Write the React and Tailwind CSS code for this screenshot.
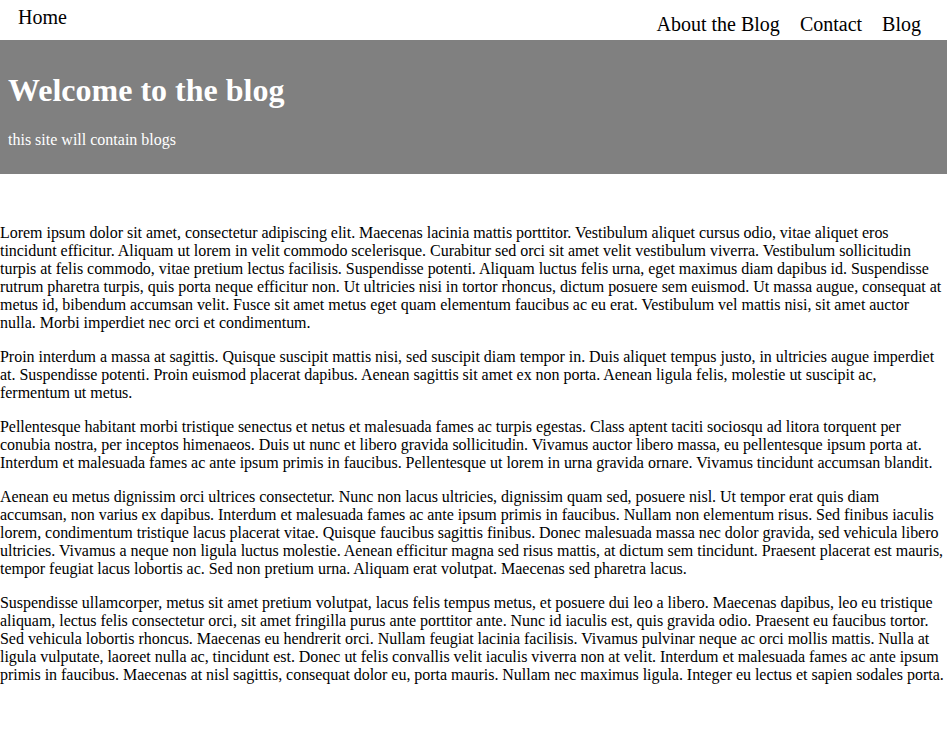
const paragraphs = [
  'Lorem ipsum dolor sit amet, consectetur adipiscing elit. Maecenas lacinia mattis porttitor. Vestibulum aliquet cursus odio, vitae aliquet eros tincidunt efficitur. Aliquam ut lorem in velit commodo scelerisque. Curabitur sed orci sit amet velit vestibulum viverra. Vestibulum sollicitudin turpis at felis commodo, vitae pretium lectus facilisis. Suspendisse potenti. Aliquam luctus felis urna, eget maximus diam dapibus id. Suspendisse rutrum pharetra turpis, quis porta neque efficitur non. Ut ultricies nisi in tortor rhoncus, dictum posuere sem euismod. Ut massa augue, consequat at metus id, bibendum accumsan velit. Fusce sit amet metus eget quam elementum faucibus ac eu erat. Vestibulum vel mattis nisi, sit amet auctor nulla. Morbi imperdiet nec orci et condimentum.',
  'Proin interdum a massa at sagittis. Quisque suscipit mattis nisi, sed suscipit diam tempor in. Duis aliquet tempus justo, in ultricies augue imperdiet at. Suspendisse potenti. Proin euismod placerat dapibus. Aenean sagittis sit amet ex non porta. Aenean ligula felis, molestie ut suscipit ac, fermentum ut metus.',
  'Pellentesque habitant morbi tristique senectus et netus et malesuada fames ac turpis egestas. Class aptent taciti sociosqu ad litora torquent per conubia nostra, per inceptos himenaeos. Duis ut nunc et libero gravida sollicitudin. Vivamus auctor libero massa, eu pellentesque ipsum porta at. Interdum et malesuada fames ac ante ipsum primis in faucibus. Pellentesque ut lorem in urna gravida ornare. Vivamus tincidunt accumsan blandit.',
  'Aenean eu metus dignissim orci ultrices consectetur. Nunc non lacus ultricies, dignissim quam sed, posuere nisl. Ut tempor erat quis diam accumsan, non varius ex dapibus. Interdum et malesuada fames ac ante ipsum primis in faucibus. Nullam non elementum risus. Sed finibus iaculis lorem, condimentum tristique lacus placerat vitae. Quisque faucibus sagittis finibus. Donec malesuada massa nec dolor gravida, sed vehicula libero ultricies. Vivamus a neque non ligula luctus molestie. Aenean efficitur magna sed risus mattis, at dictum sem tincidunt. Praesent placerat est mauris, tempor feugiat lacus lobortis ac. Sed non pretium urna. Aliquam erat volutpat. Maecenas sed pharetra lacus.',
  'Suspendisse ullamcorper, metus sit amet pretium volutpat, lacus felis tempus metus, et posuere dui leo a libero. Maecenas dapibus, leo eu tristique aliquam, lectus felis consectetur orci, sit amet fringilla purus ante porttitor ante. Nunc id iaculis est, quis gravida odio. Praesent eu faucibus tortor. Sed vehicula lobortis rhoncus. Maecenas eu hendrerit orci. Nullam feugiat lacinia facilisis. Vivamus pulvinar neque ac orci mollis mattis. Nulla at ligula vulputate, laoreet nulla ac, tincidunt est. Donec ut felis convallis velit iaculis viverra non at velit. Interdum et malesuada fames ac ante ipsum primis in faucibus. Maecenas at nisl sagittis, consequat dolor eu, porta mauris. Nullam nec maximus ligula. Integer eu lectus et sapien sodales porta.',
];

const links = ['About the Blog', 'Contact', 'Blog'];

export default function App() {
  return (
    <div className="min-h-screen bg-white text-black font-['Liberation_Serif',serif] text-base leading-[normal]">
      <nav className="flex h-10 items-start justify-between">
        <a href="#" className="pl-[18px] pt-[3px] text-xl">
          Home
        </a>
        <ul className="flex gap-[20px] pr-[26px] pt-[10px] text-xl">
          {links.map((link) => (
            <li key={link}>
              <a href="#">{link}</a>
            </li>
          ))}
        </ul>
      </nav>

      <header className="bg-[#808080] px-2 pt-2 pb-[9px] text-white">
        <h1 className="mt-[24px] mb-[22px] text-[32px] font-bold">Welcome to the blog</h1>
        <p className="my-4">this site will contain blogs</p>
      </header>

      <main className="pt-[50px] tracking-[-0.03px]">
        {paragraphs.map((text, i) => (
          <p key={i} className="mb-4">
            {text}
          </p>
        ))}
      </main>
    </div>
  );
}
